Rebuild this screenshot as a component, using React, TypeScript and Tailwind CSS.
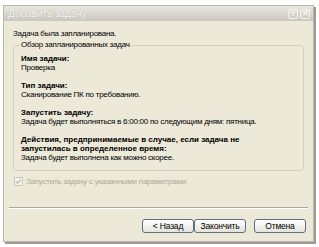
const font = { fontFamily: '"Liberation Sans", Arial, sans-serif' };

function TitleButton({ children }: { children: React.ReactNode }) {
  return (
    <div className="w-[10px] h-[10px] rounded-[2px] border border-[#f4f3ee] bg-gradient-to-b from-[#e6e4dc] to-[#cfccc2] flex items-center justify-center text-[8px] leading-none text-[#f6f6f2] font-bold">
      {children}
    </div>
  );
}

function Button({ label, className = '' }: { label: string; className?: string }) {
  return (
    <div
      className={`h-[14px] w-[52px] rounded-[3px] border border-[#5f6e85] bg-gradient-to-b from-white to-[#e5e3d9] flex items-center justify-center text-[8.5px] tracking-[-0.2px] leading-none text-black ${className}`}
    >
      {label}
    </div>
  );
}

function Block({ title, lines }: { title: string[]; lines: string }) {
  return (
    <div className="mb-[9px]">
      {title.map((t) => (
        <div key={t} className="font-bold text-[8px] leading-[9px] text-black">
          {t}
        </div>
      ))}
      <div className="text-[8px] tracking-[-0.25px] leading-[9px] text-black">{lines}</div>
    </div>
  );
}

export default function App() {
  return (
    <div className="w-[319px] h-[247px] bg-white overflow-hidden" style={font}>
      <div className="ml-[3px] mt-[5px] w-[311px] h-[237px] bg-[#ece9d8] border border-[#b9b6a8] shadow-[2px_2px_0_#9c9a92] flex flex-col">
        <div className="h-[15px] bg-gradient-to-b from-[#e8e7e2] via-[#d8d6cf] to-[#c9c7bf] flex items-center pl-[4px] pr-[3px]">
          <span className="text-[10px] leading-none text-[#f7f7f4] flex-1 [text-shadow:0_0_1px_#a8a59c]">Добавить задачу</span>
          <div className="flex gap-[2px]">
            <TitleButton>?</TitleButton>
            <TitleButton>✕</TitleButton>
          </div>
        </div>

        <div className="flex-1 flex flex-col px-[9px]">
          <div className="text-[8px] tracking-[-0.25px] leading-[10px] text-black mt-[8px] mb-[1px]">Задача была запланирована.</div>

          <fieldset className="border border-[#d0cfc2] rounded-[3px] px-[7px] pt-[4px] pb-0 h-[131px]">
            <legend className="px-[1px] ml-[-1px] text-[8px] tracking-[-0.25px] leading-[10px] text-black">Обзор запланированных задач</legend>
            <Block title={['Имя задачи:']} lines="Проверка" />
            <Block title={['Тип задачи:']} lines="Сканирование ПК по требованию." />
            <Block title={['Запустить задачу:']} lines="Задача будет выполняться в 6:00:00 по следующим дням: пятница." />
            <Block
              title={['Действия, предпринимаемые в случае, если задача не', 'запустилась в определенное время:']}
              lines="Задача будет выполнена как можно скорее."
            />
          </fieldset>

          <div className="flex items-center gap-[3px] mt-[6px] ml-[1px]">
            <div className="w-[9px] h-[9px] border border-[#c9c7ba] bg-[#f4f3ee] flex items-center justify-center">
              <svg width="7" height="7" viewBox="0 0 7 7">
                <path d="M1 3.5 L2.8 5.3 L6 1.5" stroke="#c3c1b4" strokeWidth="1.4" fill="none" />
              </svg>
            </div>
            <span className="text-[8px] tracking-[-0.25px] leading-none text-[#aca899]">Запустить задачу с указанными параметрами</span>
          </div>

          <div className="mt-auto mb-[8px]">
            <div className="border-t border-[#aca899] border-b border-b-white -mx-[4px] mb-[10px]" />
            <div className="flex justify-end items-center">
              <Button label="< Назад" />
              <Button label="Закончить" />
              <Button label="Отмена" className="ml-[8px] mr-[-2px]" />
            </div>
          </div>
        </div>
      </div>
    </div>
  );
}
